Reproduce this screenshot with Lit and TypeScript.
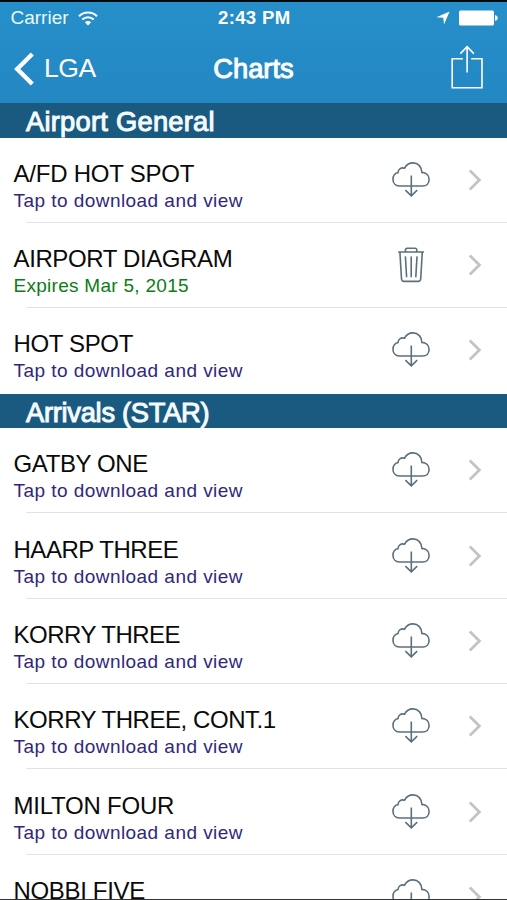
import { LitElement, html, css, svg } from "lit";
import { customElement, property } from "lit/decorators.js";
import { classMap } from "lit/directives/class-map.js";

interface Chart {
  title: string;
  spacing: number;
  expires?: string;
}

interface Section {
  name: string;
  spacing: number;
  charts: Chart[];
}

const sections: Section[] = [
  {
    name: "Airport General",
    spacing: 0.25,
    charts: [
      { title: "A/FD HOT SPOT", spacing: -0.22 },
      { title: "AIRPORT DIAGRAM", spacing: -0.38, expires: "Expires Mar 5, 2015" },
      { title: "HOT SPOT", spacing: -0.35 },
    ],
  },
  {
    name: "Arrivals (STAR)",
    spacing: -0.28,
    charts: [
      { title: "GATBY ONE", spacing: -0.38 },
      { title: "HAARP THREE", spacing: -0.46 },
      { title: "KORRY THREE", spacing: -0.5 },
      { title: "KORRY THREE, CONT.1", spacing: -0.45 },
      { title: "MILTON FOUR", spacing: -0.22 },
      { title: "NOBBI FIVE", spacing: -0.33 },
    ],
  },
];

const cloud = svg`
  <path d="M8.4 26 C4.4 25.8 2 23 2 19.4 C2 16 4 13.4 7 12.6 C7.2 9 10.2 7.2 13.6 8.2 C15.2 4.8 18.4 2.9 22 2.9 C27.2 2.9 30.8 6.9 30.9 12.4 C35.4 12.6 38.1 15.6 38.1 19.4 C38.1 23.2 35.6 26 31.8 26 Z" />
  <path d="M20.3 15.4 V35.6 M14.4 30.2 L20.3 35.8 L26.2 30.2" />`;

const trash = svg`
  <path d="M7.2 7 H33 M14.4 6.8 V5 Q14.4 3.2 16.2 3.2 H24 Q25.8 3.2 25.8 5 V6.8" />
  <path d="M8.9 7 L10.5 34 Q10.7 36.4 13 36.4 H27.2 Q29.5 36.4 29.7 34 L31.3 7" />
  <path d="M14.4 11.4 L15.6 32.2 M20.2 11.4 V32.2 M26 11.4 L24.8 32.2" />`;

@customElement("status-bar")
class StatusBar extends LitElement {
  static styles = css`
    :host {
      display: grid;
      grid-template-columns: 1fr auto 1fr;
      align-items: center;
      height: 32px;
      padding: 0 9px 0 10.5px;
      color: #fff;
      font-size: 19px;
      line-height: 22px;
    }
    .left,
    .right {
      display: flex;
      align-items: center;
    }
    .left {
      gap: 9px;
      color: #eaf8ff;
    }
    .right {
      justify-content: flex-end;
      gap: 9px;
    }
    .time {
      font-weight: bold;
      font-size: 18.6px;
      letter-spacing: 0.3px;
    }
    svg {
      display: block;
    }
  `;

  render() {
    return html`
      <div class="left">
        <span>Carrier</span>
        <svg width="20" height="15" viewBox="0 0 20 15" fill="none" stroke="#fff" stroke-width="2.1">
          <path d="M1 5.2 C6 .3 14 .3 19 5.2" />
          <path d="M4.3 8.6 C7.6 5.5 12.4 5.5 15.7 8.6" />
          <path d="M6.8 11.2 C8.7 9.5 11.3 9.5 13.2 11.2 L10 14.6 Z" fill="#fff" stroke="none" />
        </svg>
      </div>
      <span class="time">2:43 PM</span>
      <div class="right">
        <svg width="14" height="14" viewBox="0 0 14 14" fill="#fff">
          <path d="M13.6 .4 L8 13.6 L7.3 6.8 L.4 6.2 Z" />
        </svg>
        <svg width="39" height="16" viewBox="0 0 39 16" fill="#fff">
          <rect x="0" y=".4" width="35" height="15" rx="1.5" />
          <path d="M36 5 Q38.8 5.6 38.8 8 Q38.8 10.4 36 11 Z" />
        </svg>
      </div>
    `;
  }
}

@customElement("nav-bar")
class NavBar extends LitElement {
  static styles = css`
    :host {
      display: grid;
      grid-template-columns: 1fr auto 1fr;
      align-items: center;
      height: 69px;
      padding: 0 23px 0 13px;
      color: #fff;
    }
    .back {
      display: flex;
      align-items: center;
      gap: 9px;
      font-size: 26.5px;
      letter-spacing: -0.4px;
    }
    .title {
      font-size: 27.3px;
      -webkit-text-stroke: 1px #fff;
      transform: translateX(5px);
    }
    .share {
      justify-self: end;
      margin-bottom: 4px;
    }
    svg {
      display: block;
    }
  `;

  render() {
    return html`
      <div class="back">
        <svg width="22" height="34" viewBox="0 0 22 34" fill="none" stroke="#fff" stroke-width="4.4">
          <path d="M19.3 2 L4.2 17 L19.3 32" />
        </svg>
        <span>LGA</span>
      </div>
      <span class="title">Charts</span>
      <svg class="share" width="34" height="46" viewBox="0 0 34 46" fill="none" stroke="#fff" stroke-width="1.6">
        <path d="M12.9 14.8 H2.2 V43.8 H32 V14.8 H21.2" />
        <path d="M17.1 28.5 V3 M10.4 9.6 L17.1 2.6 L23.8 9.6" />
      </svg>
    `;
  }
}

@customElement("chart-row")
class ChartRow extends LitElement {
  @property({ attribute: false }) chart!: Chart;
  @property({ type: Boolean }) last = false;

  static styles = css`
    :host {
      display: block;
    }
    .row {
      display: grid;
      grid-template-columns: 1fr 40px 14px;
      column-gap: 37px;
      height: 85.35px;
      padding: 0 25px 0 13.5px;
      box-sizing: border-box;
      background: linear-gradient(#e2e2e4, #e2e2e4) 26px 100% / 100% 1.4px no-repeat;
    }
    .row.last {
      background: none;
    }
    .text {
      padding-top: 22px;
      white-space: nowrap;
    }
    .title {
      font-size: 24px;
      line-height: 28px;
      color: #0a0a0a;
    }
    .detail {
      font-size: 19px;
      line-height: 25px;
      letter-spacing: 0.45px;
      color: #30287c;
    }
    .detail.saved {
      letter-spacing: 0.28px;
      color: #0b7d12;
    }
    .icon {
      margin-top: 22px;
    }
    .chevron {
      margin-top: 31px;
    }
  `;

  render() {
    const { title, spacing, expires } = this.chart;
    return html`
      <div class=${classMap({ row: true, last: this.last })}>
        <div class="text">
          <div class="title" style="letter-spacing:${spacing}px">${title}</div>
          <div class=${classMap({ detail: true, saved: !!expires })}>
            ${expires ?? "Tap to download and view"}
          </div>
        </div>
        <svg class="icon" width="40" height="40" viewBox="0 0 40 40" fill="none" stroke="#5c707c" stroke-width="1.6">
          ${expires ? trash : cloud}
        </svg>
        <svg class="chevron" width="14" height="22" viewBox="0 0 14 22" fill="none" stroke="#c4c4c7" stroke-width="2.8">
          <path d="M1.8 1.6 L11.4 11 L1.8 20.4" />
        </svg>
      </div>
    `;
  }
}

@customElement("app-root")
class AppRoot extends LitElement {
  static styles = css`
    :host {
      display: flex;
      flex-direction: column;
      height: 900px;
      box-sizing: border-box;
      overflow: hidden;
      border-top: 2px solid #03080c;
      border-bottom: 1px solid #333;
      background: #fff;
      font-family: "Liberation Sans", Arial, sans-serif;
    }
    .bar {
      flex: none;
      height: 101px;
      background: linear-gradient(#268fca, #2387c2);
    }
    .list {
      flex: 1;
      min-height: 0;
      overflow: hidden;
    }
    .heading {
      height: 34.6px;
      padding-left: 26px;
      line-height: 37px;
      font-size: 27.3px;
      color: #f4fbff;
      -webkit-text-stroke: 1px #f4fbff;
      background: #1b5a80;
    }
  `;

  render() {
    return html`
      <div class="bar">
        <status-bar></status-bar>
        <nav-bar></nav-bar>
      </div>
      <div class="list">
        ${sections.map(
          (s) => html`
            <div class="heading" style="letter-spacing:${s.spacing}px">${s.name}</div>
            ${s.charts.map(
              (c, i) => html`<chart-row .chart=${c} ?last=${i === s.charts.length - 1}></chart-row>`
            )}
          `
        )}
      </div>
    `;
  }
}
